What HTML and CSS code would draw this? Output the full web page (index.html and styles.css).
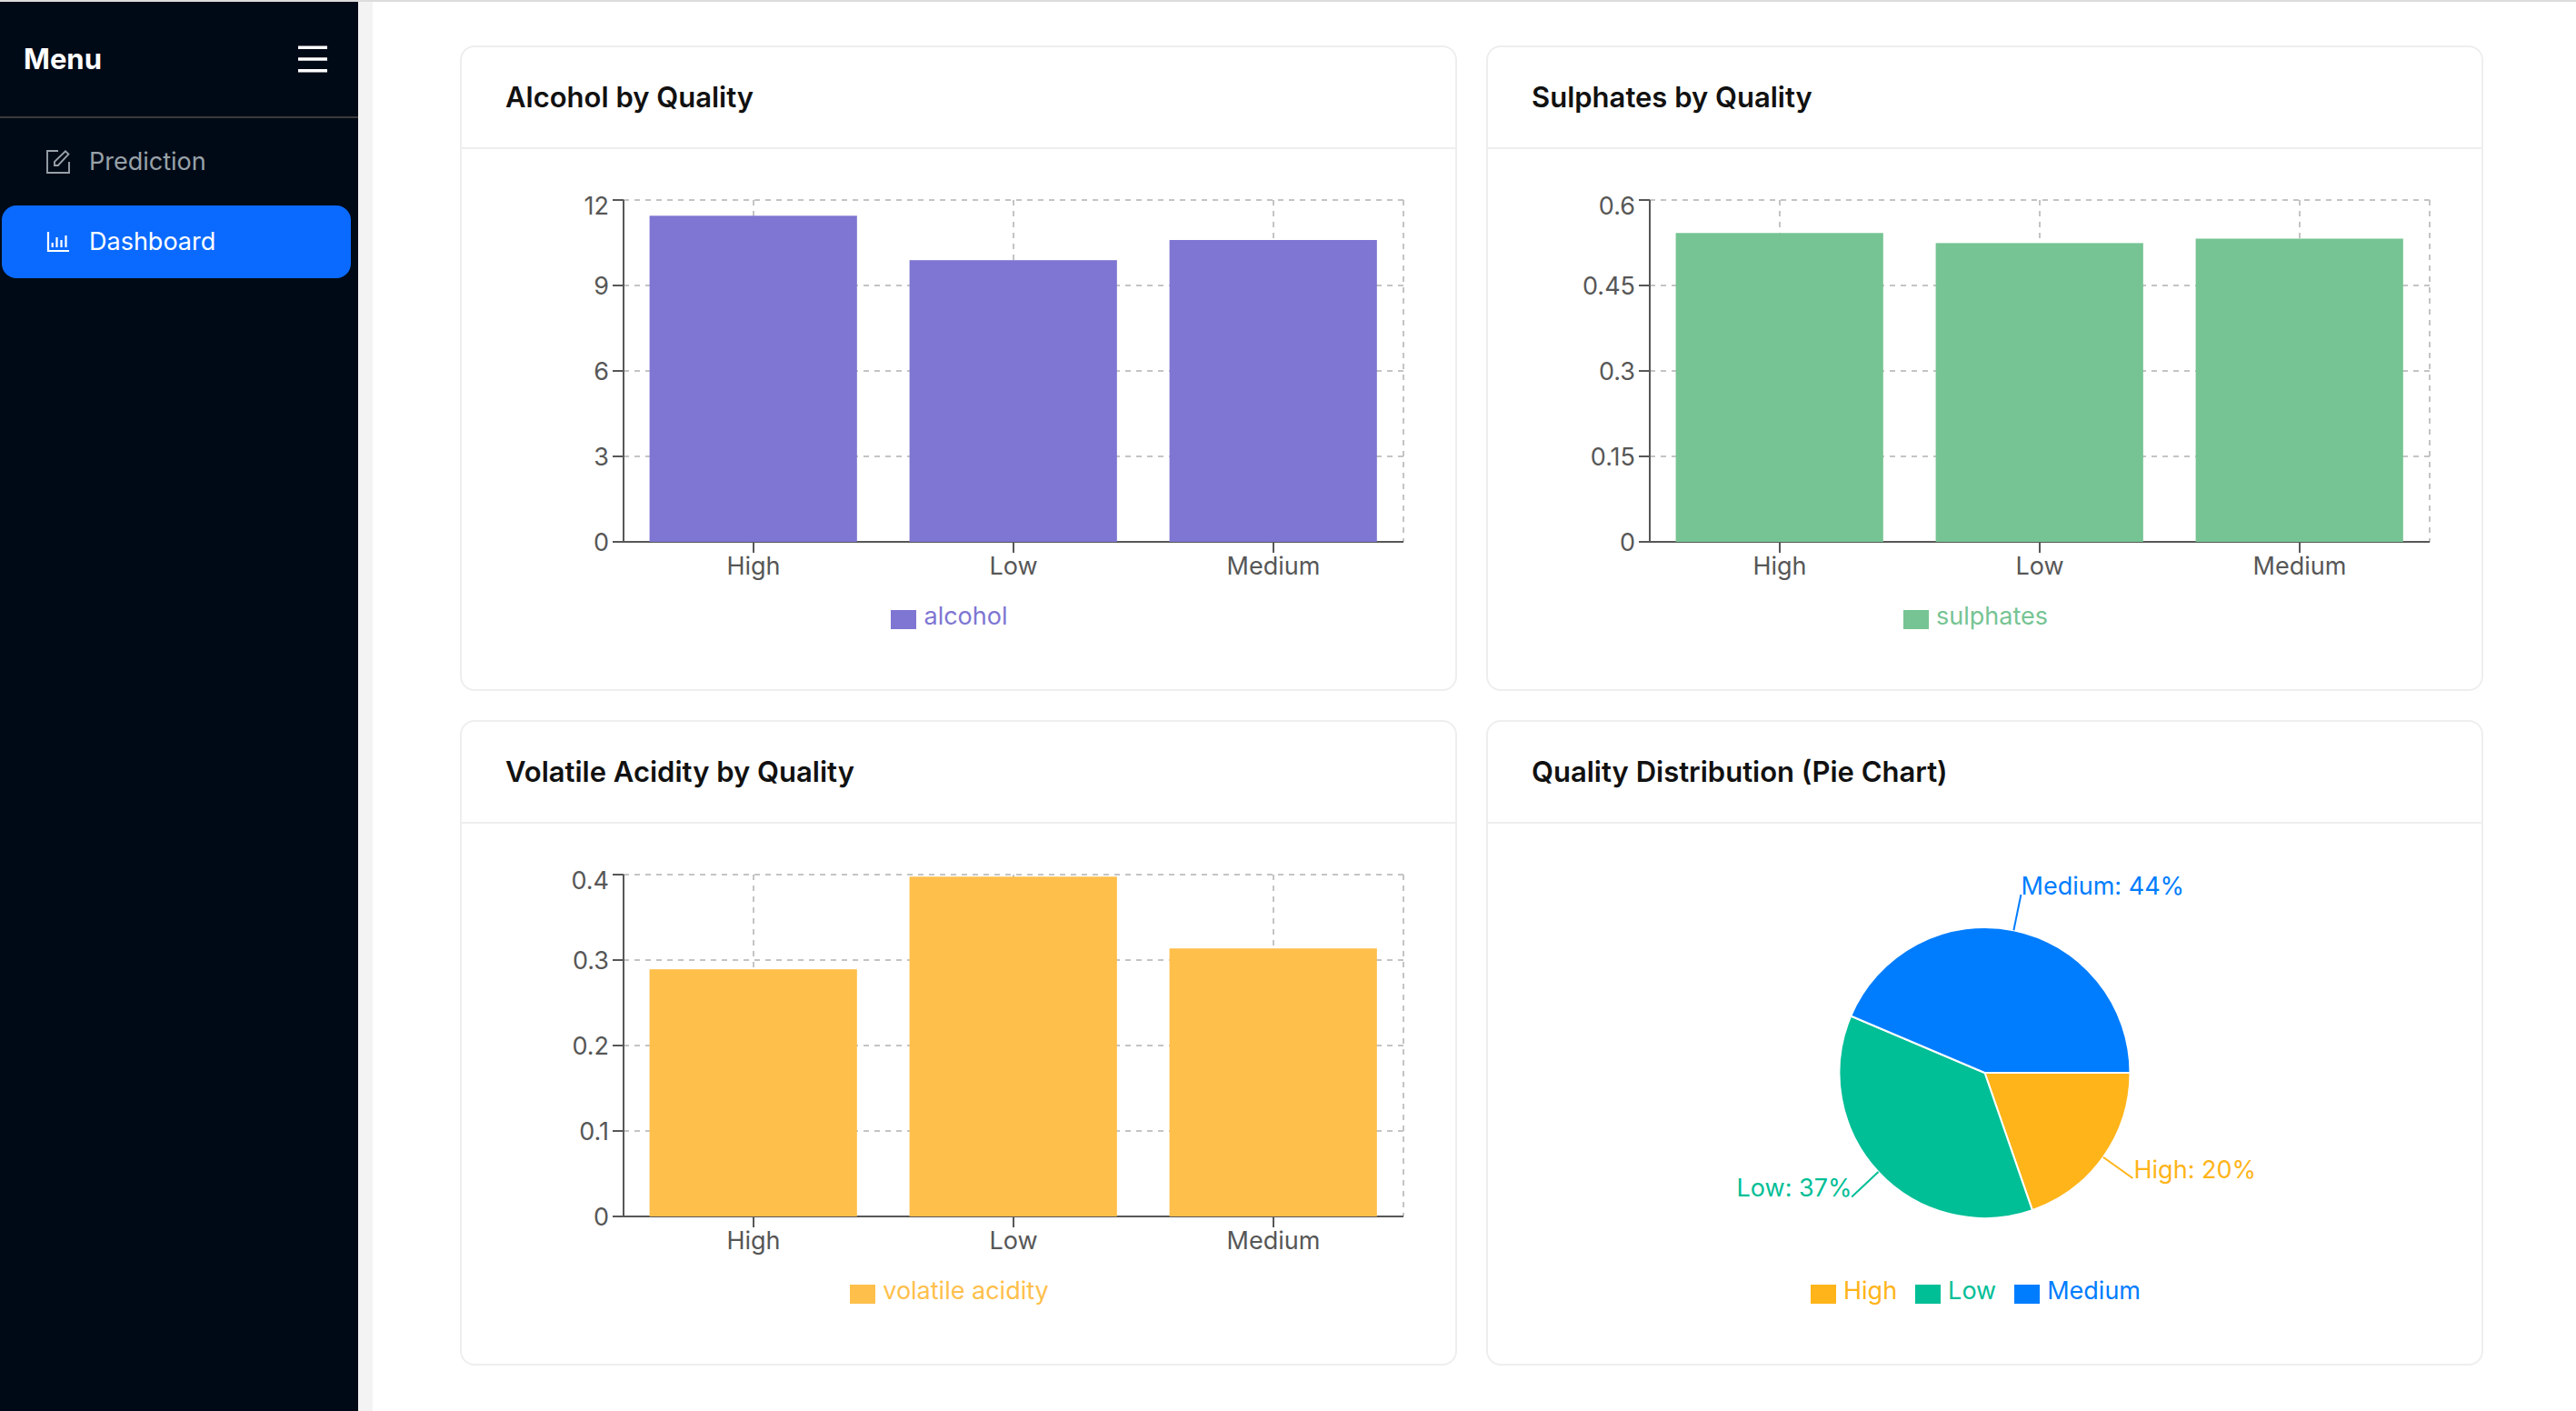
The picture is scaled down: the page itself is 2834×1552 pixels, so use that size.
FILE: index.html
```html
<!DOCTYPE html>
<html lang="en">
<head>
<meta charset="utf-8">
<title>Dashboard</title>
<link rel="stylesheet" href="styles.css">
</head>
<body>
<div class="app">
  <aside class="sidebar">
    <header class="sidebar-header">
      <h1 class="sidebar-title">Menu</h1>
      <button class="menu-toggle" type="button" aria-label="Toggle menu">
        <svg width="32" height="30" viewBox="0 0 32 30" aria-hidden="true"><path d="M0 2.3h32M0 15h32M0 27.7h32" stroke="#fff" stroke-width="3.4"/></svg>
      </button>
    </header>
    <nav class="nav">
      <a class="nav-item" href="#prediction">
        <svg class="nav-icon" viewBox="0 0 26 26" fill="none" stroke="currentColor" stroke-width="1.9" aria-hidden="true"><path d="M13 1H1v24h24V13"/><path d="M9 17v-4.2L21 1.4 24.4 4.6 12.8 17z"/></svg>
        <span>Prediction</span>
      </a>
      <a class="nav-item active" href="#dashboard" aria-current="page">
        <svg class="nav-icon" viewBox="0 0 26 26" fill="none" stroke="currentColor" stroke-width="2.2" aria-hidden="true"><path d="M2 2v21h23"/><path d="M6.7 14v5M11.5 8v11M16.5 11v8M21.5 6v13"/></svg>
        <span>Dashboard</span>
      </a>
    </nav>
  </aside>
  <main class="content">
    <section class="card purple">
      <h2 class="card-title">Alcohol by Quality</h2>
      <div class="card-body">
        <div class="plot-area">
          <svg class="plot" role="img" aria-label="Alcohol by quality">
            <g class="grid"><line x2="100%" y1="0" y2="0"/><line x2="100%" y1="25%" y2="25%"/><line x2="100%" y1="50%" y2="50%"/><line x2="100%" y1="75%" y2="75%"/><line x1="16.667%" x2="16.667%" y2="100%"/><line x1="50%" x2="50%" y2="100%"/><line x1="83.333%" x2="83.333%" y2="100%"/><line x1="100%" x2="100%" y2="100%"/></g>
            <g class="axis"><line y2="100%"/><line x1="-12" x2="100%" y1="100%" y2="100%"/><line x1="-12" y1="0" y2="0"/><line x1="-12" y1="25%" y2="25%"/><line x1="-12" y1="50%" y2="50%"/><line x1="-12" y1="75%" y2="75%"/><line x1="16.667%" x2="16.667%" y1="376" y2="388"/><line x1="50%" x2="50%" y1="376" y2="388"/><line x1="83.333%" x2="83.333%" y1="376" y2="388"/></g>
            <g class="series"><rect x="3.333%" width="26.6%" y="4.6%" height="95.4%"/><rect x="36.667%" width="26.6%" y="17.6%" height="82.4%"/><rect x="70%" width="26.6%" y="11.7%" height="88.3%"/></g>
            <g class="y-labels"><text x="-16" y="0" dy="16">12</text><text x="-16" y="25%" dy="10">9</text><text x="-16" y="50%" dy="10">6</text><text x="-16" y="75%" dy="10">3</text><text x="-16" y="100%" dy="10">0</text></g>
            <g class="x-labels"><text x="16.667%" y="412">High</text><text x="50%" y="412">Low</text><text x="83.333%" y="412">Medium</text></g>
          </svg>
        </div>
        <ul class="legend"><li class="legend-item">alcohol</li></ul>
      </div>
    </section>

    <section class="card mint">
      <h2 class="card-title">Sulphates by Quality</h2>
      <div class="card-body">
        <div class="plot-area">
          <svg class="plot" role="img" aria-label="Sulphates by quality">
            <g class="grid"><line x2="100%" y1="0" y2="0"/><line x2="100%" y1="25%" y2="25%"/><line x2="100%" y1="50%" y2="50%"/><line x2="100%" y1="75%" y2="75%"/><line x1="16.667%" x2="16.667%" y2="100%"/><line x1="50%" x2="50%" y2="100%"/><line x1="83.333%" x2="83.333%" y2="100%"/><line x1="100%" x2="100%" y2="100%"/></g>
            <g class="axis"><line y2="100%"/><line x1="-12" x2="100%" y1="100%" y2="100%"/><line x1="-12" y1="0" y2="0"/><line x1="-12" y1="25%" y2="25%"/><line x1="-12" y1="50%" y2="50%"/><line x1="-12" y1="75%" y2="75%"/><line x1="16.667%" x2="16.667%" y1="376" y2="388"/><line x1="50%" x2="50%" y1="376" y2="388"/><line x1="83.333%" x2="83.333%" y1="376" y2="388"/></g>
            <g class="series"><rect x="3.333%" width="26.6%" y="9.65%" height="90.35%"/><rect x="36.667%" width="26.6%" y="12.6%" height="87.4%"/><rect x="70%" width="26.6%" y="11.3%" height="88.7%"/></g>
            <g class="y-labels"><text x="-16" y="0" dy="16">0.6</text><text x="-16" y="25%" dy="10">0.45</text><text x="-16" y="50%" dy="10">0.3</text><text x="-16" y="75%" dy="10">0.15</text><text x="-16" y="100%" dy="10">0</text></g>
            <g class="x-labels"><text x="16.667%" y="412">High</text><text x="50%" y="412">Low</text><text x="83.333%" y="412">Medium</text></g>
          </svg>
        </div>
        <ul class="legend"><li class="legend-item">sulphates</li></ul>
      </div>
    </section>

    <section class="card amber">
      <h2 class="card-title">Volatile Acidity by Quality</h2>
      <div class="card-body">
        <div class="plot-area">
          <svg class="plot" role="img" aria-label="Volatile acidity by quality">
            <g class="grid"><line x2="100%" y1="0" y2="0"/><line x2="100%" y1="25%" y2="25%"/><line x2="100%" y1="50%" y2="50%"/><line x2="100%" y1="75%" y2="75%"/><line x1="16.667%" x2="16.667%" y2="100%"/><line x1="50%" x2="50%" y2="100%"/><line x1="83.333%" x2="83.333%" y2="100%"/><line x1="100%" x2="100%" y2="100%"/></g>
            <g class="axis"><line y2="100%"/><line x1="-12" x2="100%" y1="100%" y2="100%"/><line x1="-12" y1="0" y2="0"/><line x1="-12" y1="25%" y2="25%"/><line x1="-12" y1="50%" y2="50%"/><line x1="-12" y1="75%" y2="75%"/><line x1="16.667%" x2="16.667%" y1="376" y2="388"/><line x1="50%" x2="50%" y1="376" y2="388"/><line x1="83.333%" x2="83.333%" y1="376" y2="388"/></g>
            <g class="series"><rect x="3.333%" width="26.6%" y="27.7%" height="72.3%"/><rect x="36.667%" width="26.6%" y="0.6%" height="99.4%"/><rect x="70%" width="26.6%" y="21.6%" height="78.4%"/></g>
            <g class="y-labels"><text x="-16" y="0" dy="16">0.4</text><text x="-16" y="25%" dy="10">0.3</text><text x="-16" y="50%" dy="10">0.2</text><text x="-16" y="75%" dy="10">0.1</text><text x="-16" y="100%" dy="10">0</text></g>
            <g class="x-labels"><text x="16.667%" y="412">High</text><text x="50%" y="412">Low</text><text x="83.333%" y="412">Medium</text></g>
          </svg>
        </div>
        <ul class="legend"><li class="legend-item">volatile acidity</li></ul>
      </div>
    </section>

    <section class="card">
      <h2 class="card-title">Quality Distribution (Pie Chart)</h2>
      <div class="card-body">
        <div class="pie-area">
          <svg class="plot" role="img" aria-label="Quality distribution">
            <svg class="pie" x="50%" y="218">
              <g class="orange"><path class="slice" d="M0 0H160A160 160 0 0 1 52.4 151.2Z"/><path class="leader" d="M130.3 92.8L162.9 116"/><text x="164" y="116">High: 20%</text></g>
              <g class="green"><path class="slice" d="M0 0L52.4 151.2A160 160 0 0 1 -147.3 -62.5Z"/><path class="leader" d="M-117 109.1L-146.3 136.4"/><text class="end" x="-146" y="136">Low: 37%</text></g>
              <g class="blue"><path class="slice" d="M0 0L-147.3 -62.5A160 160 0 0 1 160 0Z"/><path class="leader" d="M31.9 -156.8L39.9 -196"/><text x="40" y="-196">Medium: 44%</text></g>
            </svg>
          </svg>
        </div>
        <ul class="legend"><li class="legend-item orange">High</li><li class="legend-item green">Low</li><li class="legend-item blue">Medium</li></ul>
      </div>
    </section>
  </main>
</div>
</body>
</html>
```
FILE: styles.css
```css
* { box-sizing: border-box; }

body {
  margin: 0;
  background: #fff;
  color: #111;
  font: 27px/44px Inter, "Liberation Sans", sans-serif;
}

.app {
  display: flex;
  min-height: 100vh;
  border-top: 2px solid #dcdcdc;
}

/* Sidebar */
.sidebar {
  flex: 0 0 394px;
  background: #000a17;
}

.sidebar-header {
  display: flex;
  align-items: center;
  justify-content: space-between;
  height: 128px;
  padding: 0 34px 0 26px;
  border-bottom: 2px solid #3a3a3a;
}

.sidebar-title {
  margin: 0;
  color: #fff;
  font-size: 31px;
  font-weight: 700;
}

.menu-toggle {
  display: flex;
  padding: 0;
  border: 0;
  background: none;
}

.nav {
  display: grid;
  gap: 8px;
  padding: 8px 8px 8px 2px;
}

.nav-item {
  display: flex;
  align-items: center;
  gap: 20px;
  height: 80px;
  padding-left: 48px;
  border-radius: 16px;
  color: #98a1a8;
  text-decoration: none;
}

.nav-item.active {
  background: #0a6aff;
  color: #fff;
}

.nav-icon {
  width: 28px;
  height: 26px;
}

/* Content */
.content {
  flex: 1;
  display: grid;
  grid-template-columns: 1fr 1fr;
  align-content: start;
  gap: 32px;
  padding: 48px 102px 48px 96px;
  border-left: 16px solid #f3f3f3;
}

.card {
  border: 2px solid #eee;
  border-radius: 16px;
}

.card-title {
  margin: 0;
  padding: 32px 48px;
  border-bottom: 2px solid #eee;
  font-size: 31px;
  line-height: 46px;
  font-weight: 600;
}

.card-body { padding: 56px 48px 58px; }

.plot-area {
  height: 436px;
  padding: 0 9px 0 130px;
}

.pie-area { height: 436px; }

.plot {
  display: block;
  width: 100%;
  height: 376px;
  overflow: visible;
}

.grid line {
  stroke: #c4c4c4;
  stroke-width: 2;
  stroke-dasharray: 6 6;
}

.axis line {
  stroke: #575757;
  stroke-width: 2;
}

.series { fill: currentColor; }

.y-labels { fill: #575757; text-anchor: end; }
.x-labels { fill: #575757; text-anchor: middle; }

.purple .card-body { color: #7e76d2; }
.mint .card-body { color: #76c493; }
.amber .card-body { color: #ffbf4b; }

.pie { overflow: visible; }
.pie text { fill: currentColor; }
.pie .end { text-anchor: end; }

.slice {
  fill: currentColor;
  stroke: #fff;
  stroke-width: 2;
}

.leader {
  fill: none;
  stroke: currentColor;
  stroke-width: 2;
}

.orange { color: #ffb419; }
.green { color: #00be96; }
.blue { color: #007dff; }

.legend {
  display: flex;
  justify-content: center;
  height: 44px;
  margin: 0;
  padding: 0;
  list-style: none;
}

.legend-item {
  display: flex;
  align-items: center;
  gap: 8px;
  margin-right: 20px;
}

.legend-item::before {
  content: "";
  width: 28px;
  height: 21px;
  margin-top: 6px;
  background: currentColor;
}
```
